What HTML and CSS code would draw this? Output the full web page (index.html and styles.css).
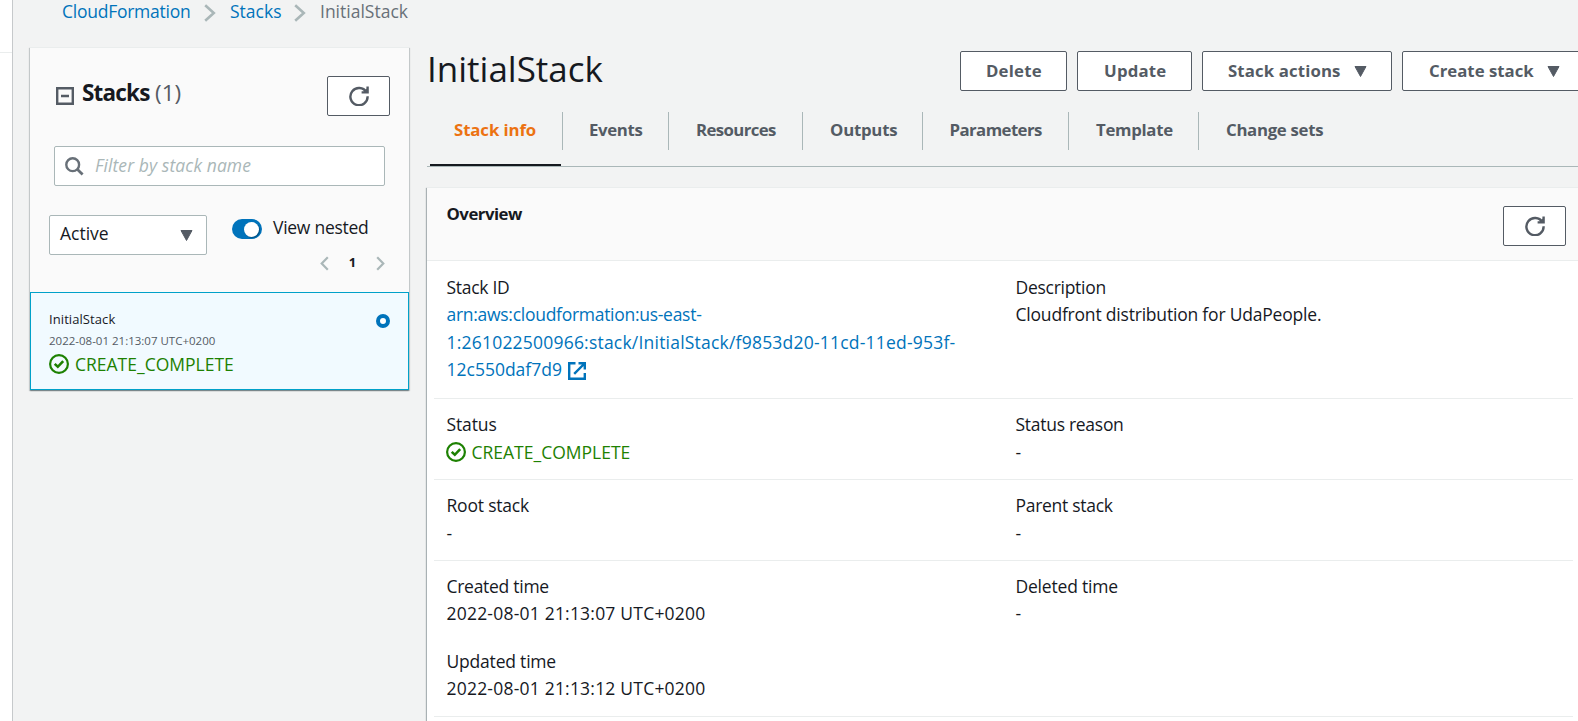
FILE: index.html
```html
<!DOCTYPE html>
<html lang="en">
<head>
<meta charset="utf-8">
<title>CloudFormation - Stack InitialStack</title>
<link rel="stylesheet" href="styles.css">
</head>
<body>
<svg class="sprite" width="0" height="0">
  <symbol id="refresh" viewBox="0 0 20 20"><path d="M17.4 6.2A8.6 8.6 0 1 0 18.6 10.2M18.6 .6V6.4H12.6" fill="none" stroke="#545b64" stroke-width="2.4"/><path d="M14 6.5L18.8 1.5V6.5Z" fill="#545b64"/></symbol>
  <symbol id="check" viewBox="0 0 20 20"><circle cx="10" cy="10" r="8.9" fill="none" stroke="#1d8102" stroke-width="2.2"/><path d="M5.7 9.9L8.8 12.8L14.2 7.2" fill="none" stroke="#1d8102" stroke-width="2.6"/></symbol>
  <symbol id="caret" viewBox="0 0 13 11"><path d="M1 .5H12L6.5 10.5Z" fill="#545b64" stroke="#545b64" stroke-linejoin="round"/></symbol>
  <symbol id="chevron" viewBox="0 0 12 18"><path d="M1.2 1.2L9.8 9L1.2 16.8" fill="none" stroke="#aab7b8" stroke-width="2.6"/></symbol>
</svg>
<div class="rail"><div class="rail-top"></div></div>
<div class="page">
  <nav class="crumbs">
    <a class="crumb-root">CloudFormation</a>
    <svg class="crumb-sep"><use href="#chevron"/></svg>
    <a class="crumb-stacks">Stacks</a>
    <svg class="crumb-sep"><use href="#chevron"/></svg>
    <span class="crumb-current">InitialStack</span>
  </nav>
  <div class="columns">
    <aside class="stacks">
      <div class="stacks-head">
        <svg class="collapse" viewBox="0 0 18 18"><path d="M1.2 1.2H16.8V16.8H1.2ZM5 9H13" fill="none" stroke="#545b64" stroke-width="2.4"/></svg>
        <h2>Stacks</h2><span class="count">(1)</span>
        <button class="icon-btn"><svg class="i20"><use href="#refresh"/></svg></button>
      </div>
      <div class="search">
        <svg class="lens" viewBox="0 0 19 19"><circle cx="7.7" cy="7.7" r="6.4" fill="none" stroke="#687078" stroke-width="2.4"/><path d="M12 12L17.6 17.4" stroke="#687078" stroke-width="2.8"/></svg>
        <span>Filter by stack name</span>
      </div>
      <div class="filters">
        <div class="select"><span>Active</span><svg class="caret"><use href="#caret"/></svg></div>
        <div class="filter-side">
          <div class="toggle-row"><span class="toggle"><i class="knob"></i></span><span class="toggle-label">View nested</span></div>
          <div class="pager">
            <svg class="page-arrow" viewBox="0 0 9 15"><path d="M7.8 1.2L1.7 7.5L7.8 13.8" fill="none" stroke="#aab7b8" stroke-width="2.2"/></svg>
            <b>1</b>
            <svg class="page-arrow" viewBox="0 0 9 15"><path d="M1.2 1.2L7.3 7.5L1.2 13.8" fill="none" stroke="#aab7b8" stroke-width="2.2"/></svg>
          </div>
        </div>
      </div>
      <div class="item">
        <div class="item-text">
          <div class="item-name">InitialStack</div>
          <div class="item-time">2022-08-01 21:13:07 UTC+0200</div>
          <div class="status item-status"><svg class="i20"><use href="#check"/></svg><span>CREATE_COMPLETE</span></div>
        </div>
        <i class="radio"></i>
      </div>
    </aside>
    <main>
      <div class="title-row">
        <h1>InitialStack</h1>
        <div class="actions">
          <button class="btn btn-delete">Delete</button>
          <button class="btn btn-update">Update</button>
          <button class="btn btn-actions">Stack actions<svg class="caret"><use href="#caret"/></svg></button>
          <button class="btn btn-create">Create stack<svg class="caret"><use href="#caret"/></svg></button>
        </div>
      </div>
      <div class="tabs">
        <div class="tab tab-info active"><span>Stack info</span></div>
        <div class="tab tab-events"><span>Events</span></div>
        <div class="tab tab-resources"><span>Resources</span></div>
        <div class="tab tab-outputs"><span>Outputs</span></div>
        <div class="tab tab-parameters"><span>Parameters</span></div>
        <div class="tab tab-template"><span>Template</span></div>
        <div class="tab tab-changes"><span>Change sets</span></div>
      </div>
      <section class="card">
        <header class="card-head"><h3>Overview</h3><button class="icon-btn"><svg class="i20"><use href="#refresh"/></svg></button></header>
        <div class="row row-id">
          <div><div class="l3">Stack ID</div>
            <a class="arn"><span class="l3">arn:aws:cloudformation:us-east-</span><br><span class="w2">1:261022500966:stack/InitialStack/f9853d20-11cd-11ed-953f-</span><br><span>12c550daf7d9</span><svg class="ext" viewBox="0 0 18 18"><path d="M7.5 1.2H1.2V16.8H16.8V11M10.5 1.2H16.8V7.5M16.5 1.5L6.2 11.8" fill="none" stroke="#0073bb" stroke-width="2.4"/></svg></a></div>
          <div><div class="l3">Description</div><div class="l2">Cloudfront distribution for UdaPeople.</div></div>
        </div>
        <div class="row row-status">
          <div><div class="l1">Status</div><div class="status"><svg class="i20"><use href="#check"/></svg><span>CREATE_COMPLETE</span></div></div>
          <div><div class="l3">Status reason</div><div class="dash">-</div></div>
        </div>
        <div class="row row-status">
          <div><div class="l2">Root stack</div><div class="dash">-</div></div>
          <div><div class="l3">Parent stack</div><div class="dash">-</div></div>
        </div>
        <div class="row row-times">
          <div><div class="l3">Created time</div><div class="w2">2022-08-01 21:13:07 UTC+0200</div></div>
          <div><div class="l2">Deleted time</div><div class="dash">-</div></div>
          <div><div class="l2">Updated time</div><div class="w2">2022-08-01 21:13:12 UTC+0200</div></div>
        </div>
      </section>
    </main>
  </div>
</div>
</body>
</html>
```
FILE: styles.css
```css
* { box-sizing: border-box; }
body {
  margin: 0; height: 721px; overflow: hidden; display: flex;
  background: #f2f3f3; color: #16191f;
  font: 17.5px/27.5px "Open Sans", "Noto Sans", sans-serif;
}
h1, h2, h3 { margin: 0; }
svg { display: block; flex: none; }
.sprite { position: absolute; }
a { color: #0073bb; }
button { font: inherit; color: inherit; margin: 0; }

/* letter-spacing steps: l = tighter, w = wider */
.l1 { letter-spacing: -.12px; }
.l2 { letter-spacing: -.2px; }
.l3 { letter-spacing: -.28px; }
.w2 { letter-spacing: .21px; }

.i20 { width: 20px; height: 20px; }
.caret { width: 13px; height: 11px; }

.rail { width: 13px; flex: none; background: #fff; border-right: 1px solid #c6c9cb; }
.rail-top { height: 53px; border-bottom: 1px solid #eaeded; }
.page { flex: 1; min-width: 0; padding-left: 17px; }

.crumbs { height: 47px; display: flex; align-items: flex-start; padding-left: 32px; line-height: 23px; }
.crumb-root { width: 142px; letter-spacing: -.25px; }
.crumb-sep { width: 12px; height: 18px; margin-top: 4px; }
.crumb-stacks { width: 64px; margin-left: 14px; }
.crumb-current { margin-left: 14px; color: #687078; }

.columns { display: flex; gap: 18px; }
.stacks {
  width: 379px; height: 343px; flex: none; background: #fafafa; border-top: 1px solid #eaeded;
  box-shadow: 0 1px 1px rgba(0,28,36,.3), 1px 1px 1px rgba(0,28,36,.15), -1px 1px 1px rgba(0,28,36,.15);
}
.stacks-head { display: flex; padding: 28px 19px 0 26px; height: 98px; }
.collapse { width: 18px; height: 18px; margin-top: 11px; }
.stacks-head h2 { font-size: 22.5px; font-weight: 700; line-height: 34px; letter-spacing: -.8px; width: 81px; padding-left: 8px; }
.count { font-size: 22.5px; line-height: 34px; color: #545b64; }
.icon-btn {
  width: 63px; height: 40px; padding: 0; margin-left: auto; background: #fff;
  border: 1px solid #545b64; border-radius: 2px; display: flex; align-items: center; justify-content: center;
}
.search {
  margin: 0 24px; height: 40px; background: #fff; border: 1px solid #aab7b8; border-radius: 2px;
  display: flex; align-items: center; padding-left: 10px; gap: 11px;
  color: #aab7b8; font-style: italic; width: 331px; letter-spacing: .1px;
}
.lens { width: 19px; height: 19px; }
.filters { display: flex; padding: 29px 0 0 19px; height: 106px; }
.select {
  width: 158px; height: 40px; background: #fff; border: 1px solid #aab7b8; border-radius: 2px;
  display: flex; align-items: center; justify-content: space-between; padding: 0 13px 0 10px;
}
.select span { padding-bottom: 2px; }
.filter-side { margin-left: 25px; padding-top: 4px; }
.toggle-row { display: flex; height: 20px; align-items: center; gap: 11px; }
.toggle { width: 30px; height: 20px; border-radius: 10px; background: #0073bb; display: flex; align-items: center; justify-content: flex-end; padding-right: 3px; }
.knob { width: 15px; height: 15px; border-radius: 50%; background: #fff; box-shadow: 1px 1px 1px rgba(0,0,0,.3); }
.toggle-label { letter-spacing: -.27px; padding-bottom: 3px; }
.pager { display: flex; align-items: center; margin: 17px 0 0 88px; width: 65px; justify-content: space-between; height: 15px; font-size: 13px; }
.pager b { padding-bottom: 2px; }
.page-arrow { width: 9px; height: 15px; }

.item { height: 98px; background: #f1faff; border: 1px solid #00a1c9; display: flex; justify-content: space-between; padding: 15px 18px 0 18px; }
.item-name { font-size: 13px; line-height: 22px; letter-spacing: .08px; }
.item-time { font-size: 11.5px; line-height: 22px; color: #545b64; }
.status { display: flex; align-items: center; gap: 6px; color: #1d8102; }
.item-status { line-height: 24px; }
.row .status svg { margin-left: -1px; }
.radio { width: 14px; height: 14px; margin-top: 6px; border: 4px solid #0073bb; border-radius: 50%; background: #fff; }

main { width: 1151px; flex: none; }
.title-row { display: flex; height: 65px; }
h1 { width: 533px; flex: none; font-size: 35px; font-weight: 400; line-height: 43px; }
.actions { display: flex; gap: 10px; padding-top: 4px; }
.btn {
  height: 40px; flex: none; display: flex; align-items: center; background: #fff; color: #545b64; font-weight: 700; font-size: 16.8px;
  border: 1px solid #545b64; border-radius: 2px; padding: 0 0 1px 25px; white-space: nowrap; letter-spacing: .2px;
}
.btn .caret { margin-left: 13px; margin-top: 1px; }
.btn-delete { width: 107px; }
.btn-update { width: 115px; padding-left: 26px; }
.btn-actions { width: 190px; letter-spacing: .12px; }
.btn-create { width: 184px; letter-spacing: 0; padding-left: 26px; }

.tabs { display: flex; border-bottom: 1px solid #aab7b8; height: 55px; font-weight: 700; font-size: 16.8px; color: #545b64; }
.tab { position: relative; height: 38px; line-height: 35px; padding-left: 27px; border-right: 1px solid #aab7b8; flex: none; white-space: nowrap; }
.tab-info { width: 136px; letter-spacing: -.1px; }
.tab-events { width: 106px; padding-left: 26px; letter-spacing: -.35px; }
.tab-resources { width: 134px; letter-spacing: -.6px; }
.tab-outputs { width: 120px; letter-spacing: -.23px; }
.tab-parameters { width: 146px; padding-left: 26.5px; letter-spacing: -.57px; }
.tab-template { width: 130px; letter-spacing: -.3px; }
.tab-changes { border: 0; letter-spacing: -.3px; }
.active { color: #ec7211; }
.active::after { content: ""; position: absolute; left: 3px; right: 1px; bottom: -16px; height: 2px; background: #16191f; }

.card { margin-top: 20px; background: #fff; border-top: 1px solid #eaeded; height: 540px; box-shadow: -1px 1px 1px rgba(0,28,36,.3); }
.card-head { display: flex; height: 73px; background: #fafafa; border-bottom: 1px solid #eaeded; padding: 18px 12px 0 19.5px; }
.card-head h3 { font-size: 16.8px; font-weight: 700; line-height: 16px; letter-spacing: -.5px; }
.row { display: grid; grid-template-columns: 569px 1fr; margin: 0 5px 0 7px; padding: 12.5px 0 14.5px 12.5px; border-bottom: 1px solid #eaeded; }
.row-status { line-height: 28px; padding-top: 10.5px; padding-bottom: 13.5px; }
.row-times { padding-top: 11.5px; padding-bottom: 13.5px; row-gap: 20px; }
.ext { display: inline-block; width: 18px; height: 18px; margin-left: 6px; vertical-align: -4px; }
.dash { letter-spacing: 0; }
```
